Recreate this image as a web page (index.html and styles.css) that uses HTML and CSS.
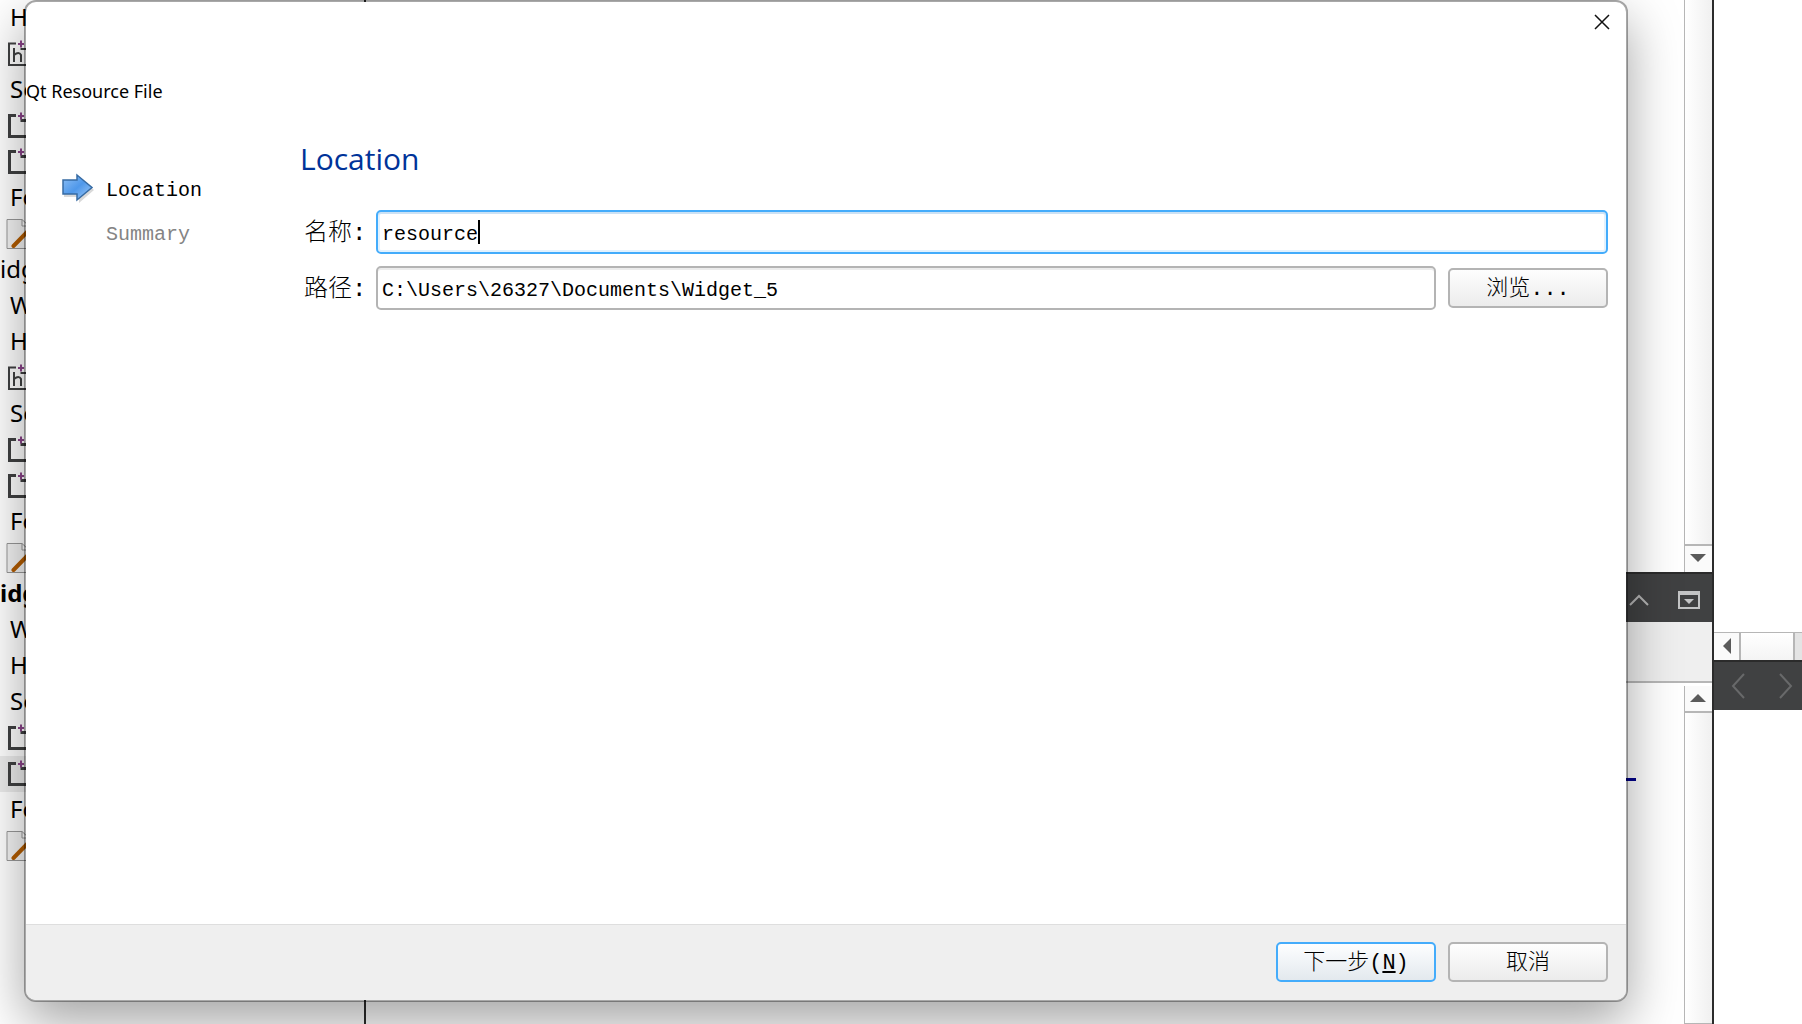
FILE: index.html
```html
<!DOCTYPE html>
<html lang="zh-CN">
<head>
  <meta charset="UTF-8" />
  <meta name="viewport" content="width=device-width, initial-scale=1" />
  <title>Qt Resource File</title>
  <link rel="stylesheet" href="styles.css">
</head>
<body>
  <svg class="defs" aria-hidden="true">
    <symbol id="icon-file" viewBox="0 0 26 28">
      <path d="M10 3.500H3.500V24.500H22V10M14.500 8.500H22" fill="none" stroke="#404142" stroke-width="3"/>
      <path d="M15 0.500v7M12 4h6" fill="none" stroke="#8a4489" stroke-width="2"/>
    </symbol>
    <symbol id="icon-header" viewBox="0 0 26 28">
      <path d="M10 3.500H3V25H23V10M14.500 9H22" fill="none" stroke="#404142" stroke-width="2"/>
      <path d="M8 8v14M8 15q5-4 7 0v7" fill="none" stroke="#404142" stroke-width="2"/>
      <path d="M15 0.500v7M12 4h6" fill="none" stroke="#8a4489" stroke-width="2"/>
    </symbol>
    <symbol id="icon-form" viewBox="0 0 26 30">
      <path d="M1 0.500H16L24 8V29.500H1zM16 0.500V7h8" fill="#f4f4f4" stroke="#999" stroke-width="1"/>
      <path d="M7.500 27L24 10" fill="none" stroke="#b35c00" stroke-width="4" stroke-linecap="round"/>
    </symbol>
  </svg>

  <div class="workspace">
    <nav class="tree" aria-label="Projects">
      <ul>
        <li>He</li>
        <li><svg class="icon"><use href="#icon-header"/></svg></li>
        <li>So</li>
        <li><svg class="icon"><use href="#icon-file"/></svg></li>
        <li><svg class="icon"><use href="#icon-file"/></svg></li>
        <li>Fo</li>
        <li><svg class="icon form"><use href="#icon-form"/></svg></li>
        <li class="project">idg</li>
        <li>Wi</li>
        <li>He</li>
        <li><svg class="icon"><use href="#icon-header"/></svg></li>
        <li>So</li>
        <li><svg class="icon"><use href="#icon-file"/></svg></li>
        <li><svg class="icon"><use href="#icon-file"/></svg></li>
        <li>Fo</li>
        <li><svg class="icon form"><use href="#icon-form"/></svg></li>
        <li class="project active">idg</li>
        <li>Wi</li>
        <li>He</li>
        <li>So</li>
        <li><svg class="icon"><use href="#icon-file"/></svg></li>
        <li class="selected"><svg class="icon"><use href="#icon-file"/></svg></li>
        <li>Fo</li>
        <li><svg class="icon form"><use href="#icon-form"/></svg></li>
      </ul>
    </nav>

    <div class="center">
      <div class="pane">
        <div class="scrollbar">
          <button class="scroll-btn down" aria-label="Scroll down"><svg width="16" height="8"><path d="M0 0h16l-8 8z" fill="#5a5a5a"/></svg></button>
        </div>
      </div>
      <div class="pane-bar">
        <button class="bar-btn" aria-label="Collapse"><svg width="20" height="12"><path d="M1 11l9-9 9 9" fill="none" stroke="#b4b4b4" stroke-width="2"/></svg></button>
        <button class="bar-btn" aria-label="Close pane"><svg width="22" height="18"><path d="M0 0h22v18H0zM2 4v12h18V4z" fill="#c3c4c5" fill-rule="evenodd"/><path d="M6 8h10l-5 5z" fill="#c3c4c5"/></svg></button>
      </div>
      <div class="pane-tabs"></div>
      <div class="pane output">
        <div class="text-mark"></div>
        <div class="scrollbar lower">
          <button class="scroll-btn up" aria-label="Scroll up"><svg width="16" height="8"><path d="M0 8h16l-8-8z" fill="#5a5a5a"/></svg></button>
        </div>
      </div>
    </div>

    <div class="side">
      <div></div>
      <div class="side-controls">
        <div class="h-scroll">
          <button class="h-btn" aria-label="Scroll left"><svg width="8" height="16"><path d="M8 0v16l-8-8z" fill="#5a5a5a"/></svg></button>
          <div class="h-thumb"></div>
        </div>
        <div class="side-bar">
          <button class="bar-btn" aria-label="Back"><svg width="14" height="26"><path d="M13 1L2 13l11 12" fill="none" stroke="#68696a" stroke-width="2"/></svg></button>
          <button class="bar-btn" aria-label="Forward"><svg width="14" height="26"><path d="M1 1l11 12L1 25" fill="none" stroke="#68696a" stroke-width="2"/></svg></button>
        </div>
      </div>
    </div>
  </div>

  <form class="dialog" role="dialog" aria-labelledby="dialog-title">
    <div class="titlebar">
      <button type="button" class="close" aria-label="Close"><svg width="16" height="16"><path d="M1 1l14 14M15 1L1 15" stroke="#111" stroke-width="1.500"/></svg></button>
    </div>
    <div class="dialog-title" id="dialog-title">Qt Resource File</div>

    <div class="dialog-body">
      <ol class="steps">
        <li class="current">
          <svg width="34" height="30" viewBox="0 0 34 30">
            <defs>
              <linearGradient id="arrow-fill" x1="0" y1="0" x2="1" y2="1">
                <stop offset="0" stop-color="#8fc0f5"/>
                <stop offset="0.5" stop-color="#4f98ea"/>
                <stop offset="1" stop-color="#a5cdf8"/>
              </linearGradient>
            </defs>
            <path d="M2 9h15V4l15 13-15 13v-6H2z" fill="#000" opacity="0.15"/>
            <path d="M1 7h14V2l15 12.500L15 27v-6H1z" fill="url(#arrow-fill)" stroke="#376ba3" stroke-width="1.500"/>
          </svg>
          <span>Location</span>
        </li>
        <li><span>Summary</span></li>
      </ol>

      <div class="page">
        <h1>Location</h1>
        <div class="fields">
          <label for="name">名称:</label>
          <div class="name-box">
            <input id="name" class="focused" type="text" value="resource">
            <span class="caret"></span>
          </div>
          <label for="path">路径:</label>
          <div class="path-box">
            <input id="path" type="text" value="C:\Users\26327\Documents\Widget_5">
            <button type="button" class="btn">浏览...</button>
          </div>
        </div>
      </div>
    </div>

    <div class="dialog-footer">
      <button type="button" class="btn primary">下一步(<u>N</u>)</button>
      <button type="button" class="btn">取消</button>
    </div>
  </form>
</body>
</html>
```
FILE: styles.css
```css
* {
  box-sizing: border-box;
  margin: 0;
  padding: 0;
}
body {
  position: relative;
  height: 100vh;
  overflow: hidden;
  background: #fff;
  color: #000;
  font-family: "Noto Sans", "Noto Sans CJK SC", sans-serif;
}
button {
  border: none;
  background: none;
  font: inherit;
}
ul, ol {
  list-style: none;
}
svg {
  display: block;
}
.defs {
  position: absolute;
  width: 0;
  height: 0;
}

/* IDE behind the dialog */
.workspace {
  display: flex;
  height: 100%;
}
.tree {
  flex: 0 0 366px;
  border-right: 2px solid #2b2b2b;
  overflow: hidden;
  font-size: 24px;
}
.tree li {
  display: flex;
  align-items: center;
  height: 36px;
  padding: 0 0 4px 10px;
}
.tree .project {
  padding-left: 0;
}
.tree .active {
  font-weight: 700;
}
.tree .selected {
  background: #ececec;
}
.icon {
  width: 26px;
  height: 28px;
  margin: 4px 0 0 -4px;
}
.icon.form {
  height: 30px;
}

.center {
  flex: 1;
  display: grid;
  grid-template-rows: 572fr 50px 64px 338fr;
  border-right: 2px solid #2b2b2b;
}
.pane {
  display: flex;
  justify-content: flex-end;
}
.scrollbar {
  display: flex;
  flex-direction: column;
  justify-content: flex-end;
  width: 28px;
  border-left: 1px solid #b6b6b6;
  background: linear-gradient(to right, #fff, #f0f0f0);
}
.scrollbar.lower {
  justify-content: flex-start;
  border-bottom: 1px solid #b6b6b6;
}
.scroll-btn {
  display: flex;
  align-items: center;
  justify-content: center;
  height: 28px;
  padding: 0 2px 2px 0;
  background: #fafafa;
}
.scroll-btn.down {
  border-top: 2px solid #b6b6b6;
}
.scroll-btn.up {
  height: 27px;
  border-bottom: 2px solid #b6b6b6;
}
.pane-bar {
  display: flex;
  align-items: center;
  justify-content: flex-end;
  gap: 29px;
  padding: 4px 12px 0 0;
  border-top: 2px solid #2b2b2b;
  background: #404142;
}
.pane-tabs {
  background: #efefef;
  box-shadow: inset 0 -1px #fff, inset 0 -3px #b6b6b6;
  border-bottom: 2px solid #fff;
}
.output {
  align-items: stretch;
}
.text-mark {
  width: 10px;
  height: 3px;
  margin: 92px 48px 0 0;
  background: #00008b;
}

.side {
  flex: 0 0 88px;
  display: grid;
  grid-template-rows: 632fr 78px 314fr;
}
.h-scroll {
  display: flex;
  height: 28px;
  border-top: 1px solid #b6b6b6;
  background: #e4e4e4;
}
.h-btn {
  display: flex;
  align-items: center;
  justify-content: center;
  width: 25px;
  padding-bottom: 2px;
  background: #fafafa;
}
.h-thumb {
  width: 56px;
  border: solid #b6b6b6;
  border-width: 0 2px;
  background: linear-gradient(#fff, #f4f4f4);
}
.side-bar {
  display: flex;
  align-items: center;
  justify-content: space-between;
  height: 50px;
  padding: 0 9px 0 17px;
  border-top: 2px solid #2b2b2b;
  background: #404142;
}

/* Dialog */
.dialog {
  position: absolute;
  inset: 0 174px 22px 24px;
  display: flex;
  flex-direction: column;
  overflow: hidden;
  border: 2px solid rgba(0, 0, 0, 0.34);
  border-radius: 12px;
  background: #fff;
  background-clip: padding-box;
  box-shadow: 0 20px 52px rgba(0, 0, 0, 0.36);
}
.titlebar {
  display: flex;
  justify-content: flex-end;
  padding: 12px 16px;
}
.dialog-title {
  margin-top: 36px;
  font-family: "Noto Sans", sans-serif;
  font-size: 18px;
  line-height: 26px;
}
.dialog-body {
  flex: 1;
  display: flex;
  padding: 36px 18px 0 36px;
}
.steps {
  flex: 0 0 238px;
  padding-top: 26px;
  font-family: "Liberation Mono", monospace;
  font-size: 20px;
  color: #848484;
}
.steps li {
  display: flex;
  align-items: center;
  gap: 10px;
  height: 44px;
  padding-left: 44px;
}
.steps span {
  padding-top: 4px;
}
.steps .current {
  padding-left: 0;
  color: #000;
}
.page {
  flex: 1;
}
.page h1 {
  color: #003399;
  font-family: "Open Sans", sans-serif;
  font-size: 30px;
  font-weight: 400;
  line-height: 38px;
}
.fields {
  display: grid;
  grid-template-columns: 72px 1fr;
  align-items: center;
  gap: 12px 0;
  margin-top: 32px;
  padding-left: 4px;
}
.fields label {
  padding-top: 4px;
  font-family: "Liberation Mono", "Noto Sans CJK SC", monospace;
  font-size: 24px;
  font-weight: 300;
  line-height: 40px;
}
.name-box {
  position: relative;
}
.path-box {
  display: flex;
  align-items: center;
  gap: 12px;
}
.fields input {
  width: 100%;
  height: 44px;
  padding: 4px 4px 0;
  border: 2px solid #b4b4b4;
  border-radius: 5px;
  outline: none;
  background: #fff;
  box-shadow: inset 0 2px #ececec;
  color: #000;
  font-family: "Liberation Mono", "Noto Sans CJK SC", monospace;
  font-size: 20px;
}
.fields .focused {
  border-color: #44acfb;
  box-shadow: inset 0 2px #cce2f5, inset 0 0 0 2px #e3f2fe;
  caret-color: transparent;
}
/* sits right behind the typed text */
.caret {
  position: absolute;
  top: 10px;
  left: 102px;
  width: 2px;
  height: 24px;
  background: #000;
}
.btn {
  flex: 0 0 160px;
  height: 40px;
  padding-top: 4px;
  border: 2px solid #b4b4b4;
  border-radius: 5px;
  background: linear-gradient(#fefefe, #ececec);
  color: #000;
  font-family: "Liberation Mono", "Noto Sans CJK SC", monospace;
  font-size: 22px;
  font-weight: 300;
  line-height: 32px;
}
.btn.primary {
  border-color: #44acfb;
  background: linear-gradient(#fdfeff, #e3e9ee);
}
.dialog-footer {
  display: flex;
  justify-content: flex-end;
  gap: 12px;
  padding: 17px 18px 18px;
  border-top: 1px solid #dedede;
  background: #efefef;
}
```
